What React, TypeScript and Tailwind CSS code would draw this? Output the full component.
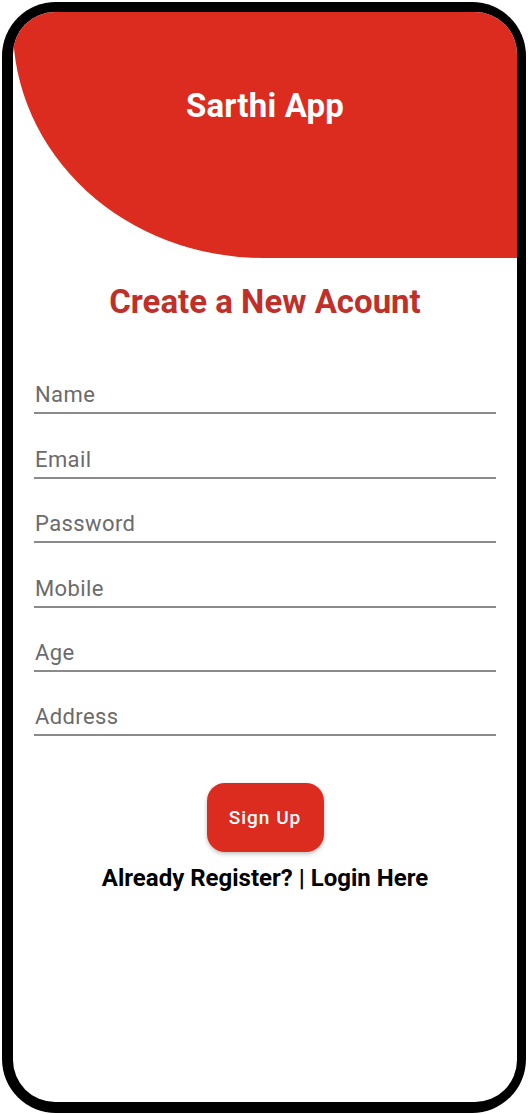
import React from "react";

const fields = ["Name", "Email", "Password", "Mobile", "Age", "Address"];

export default function App() {
  return (
    <div className="min-h-[1114px] w-[528px] bg-white pl-[2px] pt-[2px]" style={{ fontFamily: "Roboto, 'Noto Sans', sans-serif" }}>
      <div className="w-[524px] h-[1111px] bg-black rounded-[54px] pl-[11px] pt-[10px] pr-[9px] pb-[11px]">
        <div className="w-full h-full bg-white rounded-[42px] overflow-hidden flex flex-col">
          <div className="h-[246px] bg-[#dc2b1f] rounded-bl-[250px_230px] flex justify-center pt-[74px] shrink-0">
            <h1 className="text-white text-[33px] leading-[40px] font-bold tracking-[0.2px]">Sarthi App</h1>
          </div>
          <h2 className="mt-[24px] text-center text-[#c0302a] text-[33px] leading-[40px] font-bold">Create a New Acount</h2>
          <div className="mt-[28px] px-[21px] flex flex-col">
            {fields.map((f) => (
              <div key={f} className="h-[64.4px] flex items-end border-b-2 border-[#8a8a8a]">
                <input
                  placeholder={f}
                  type="text"
                  className="w-full bg-transparent outline-none text-[22px] leading-[28px] tracking-[0.4px] pb-[3px] pl-[1px] text-[#555] placeholder:text-[#6b6b6b]"
                />
              </div>
            ))}
          </div>
          <div className="mt-[47px] flex justify-center">
            <button className="w-[117px] h-[69px] rounded-[18px] bg-[#dc2b1f] text-white text-[19px] font-medium tracking-[1px] shadow-[0_2px_4px_rgba(0,0,0,0.25)]">
              Sign Up
            </button>
          </div>
          <p className="mt-[12px] text-center text-black text-[24px] leading-[28px] font-bold">
            Already Register? | Login Here
          </p>
        </div>
      </div>
    </div>
  );
}
